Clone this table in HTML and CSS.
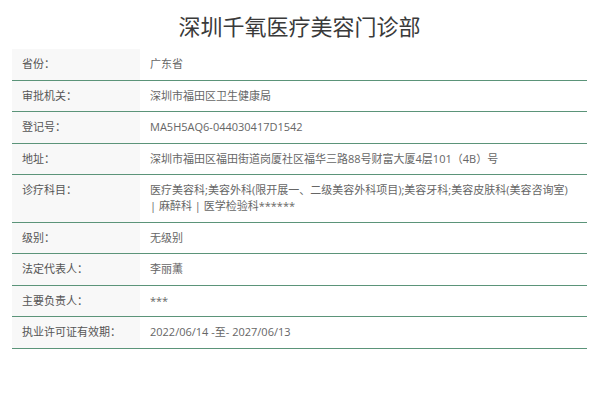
FILE: index.html
```html
<!DOCTYPE html>
<html lang="zh-CN">
<head>
<meta charset="utf-8">
<title>深圳千氧医疗美容门诊部</title>
<link rel="stylesheet" href="styles.css">
</head>
<body>
<div class="page">
  <h1 class="title">深圳千氧医疗美容门诊部</h1>
  <table class="info">
    <tr><th>省份：</th><td>广东省</td></tr>
    <tr><th>审批机关：</th><td>深圳市福田区卫生健康局</td></tr>
    <tr><th>登记号：</th><td>MA5H5AQ6-044030417D1542</td></tr>
    <tr><th>地址：</th><td>深圳市福田区福田街道岗厦社区福华三路88号财富大厦4层101（4B）号</td></tr>
    <tr><th>诊疗科目：</th><td>医疗美容科;美容外科(限开展一、二级美容外科项目);美容牙科;美容皮肤科(美容咨询室) <span class="nowrap">| 麻醉科</span> | 医学检验科******</td></tr>
    <tr><th>级别：</th><td>无级别</td></tr>
    <tr><th>法定代表人：</th><td>李丽薰</td></tr>
    <tr><th>主要负责人：</th><td>***</td></tr>
    <tr><th>执业许可证有效期：</th><td>2022/06/14 -至- 2027/06/13</td></tr>
  </table>
</div>
</body>
</html>
```

FILE: styles.css
```css
html, body {
  margin: 0;
  padding: 0;
  background: #ffffff;
}
body {
  font-family: "Open Sans", "Noto Sans CJK SC", sans-serif;
  color: #555;
}
.page {
  padding: 0 12px 0 12px;
  width: 575px;
}
.title {
  margin: 0;
  padding: 1px 0 0 0;
  height: 48px;
  line-height: 48px;
  text-align: center;
  font-family: "Noto Sans CJK SC", sans-serif;
  font-size: 22px;
  font-weight: normal;
  color: #3a3a3a;
}
.info {
  width: 575px;
  border-collapse: collapse;
  font-size: 11px;
  line-height: 16px;
}
.info th,
.info td {
  padding: 7px 10px 7.5px 10px;
  border-bottom: 1px solid #5b9479;
  text-align: left;
  vertical-align: top;
  font-weight: normal;
}
.info th {
  width: 108px;
  background: #f8f8f8;
  color: #555;
}
.info td {
  color: #666;
}
.nowrap {
  white-space: nowrap;
}
```
